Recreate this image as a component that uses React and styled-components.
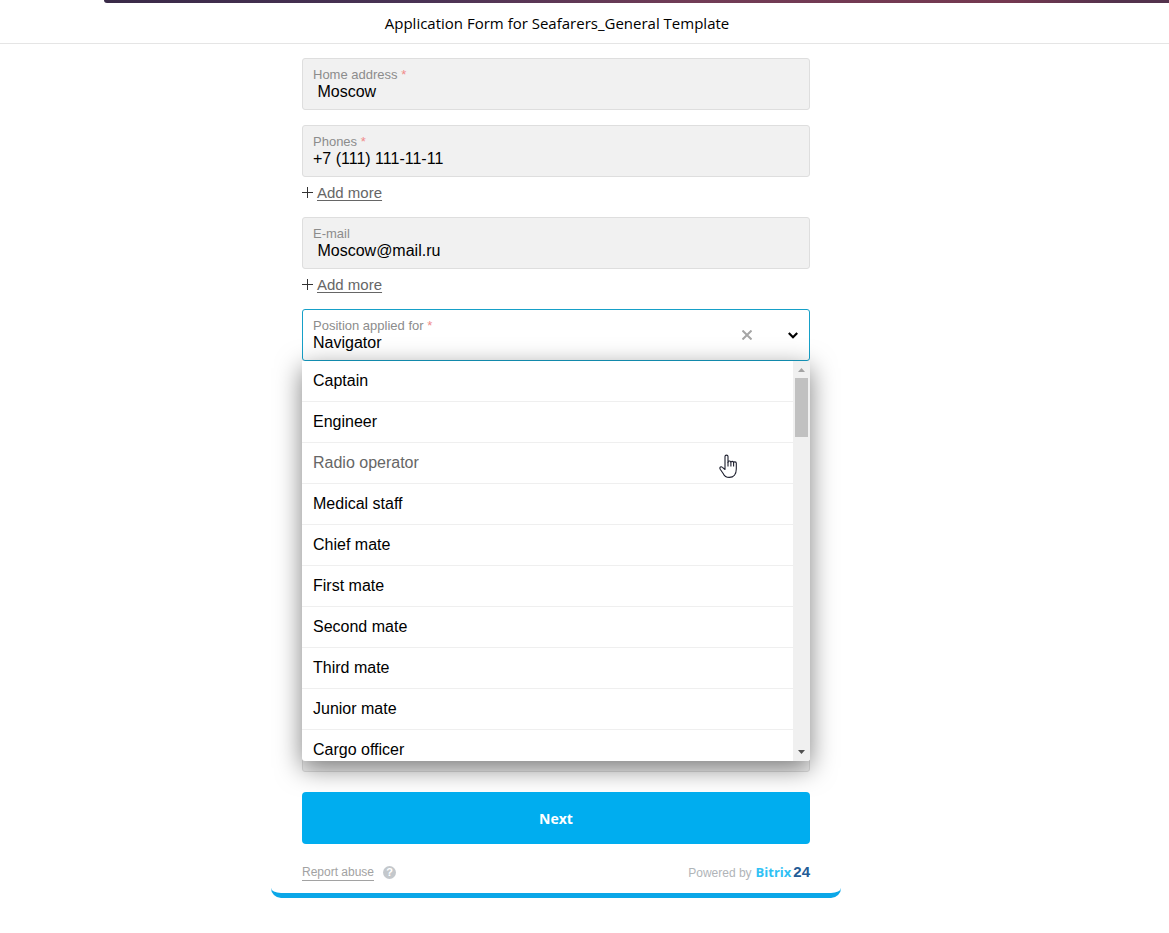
import { useId, useState } from 'react';
import styled, { createGlobalStyle } from 'styled-components';

const positions = [
    'Captain',
    'Engineer',
    'Radio operator',
    'Medical staff',
    'Chief mate',
    'First mate',
    'Second mate',
    'Third mate',
    'Junior mate',
    'Cargo officer'
];

function TextField({ label, required, type = 'text', initial }) {
    const id = useId();
    const [value, setValue] = useState(initial);

    return (
        <Field>
            <Label htmlFor={id}>
                {label} {required && <Required>*</Required>}
            </Label>
            <Input id={id} type={type} value={value} onChange={(e) => setValue(e.target.value)} />
        </Field>
    );
}

function AddMore() {
    return (
        <AddRow>
            <svg width="11" height="11" viewBox="0 0 11 11" stroke="#333" aria-hidden="true">
                <path d="M5.5 0v11M0 5.5h11" />
            </svg>
            <AddButton type="button">Add more</AddButton>
        </AddRow>
    );
}

function PositionField() {
    const [value, setValue] = useState('Navigator');
    const [active, setActive] = useState('Radio operator');

    return (
        <SelectWrap>
            <Field $open>
                <Label htmlFor="position">
                    Position applied for <Required>*</Required>
                </Label>
                <Select id="position" value={value} onChange={(e) => setValue(e.target.value)}>
                    <option>Navigator</option>
                    {positions.map((name) => (
                        <option key={name}>{name}</option>
                    ))}
                </Select>
                <FieldIcons>
                    <ClearButton type="button" aria-label="Clear" onClick={() => setValue('')}>
                        <svg width="10" height="10" viewBox="0 0 10 10" stroke="#a5a5a5" strokeWidth="2">
                            <path d="M.5 .5l9 9M9.5 .5l-9 9" />
                        </svg>
                    </ClearButton>
                    <svg width="10" height="7" viewBox="0 0 10 7" fill="none" stroke="#000" strokeWidth="2.2" aria-hidden="true">
                        <path d="M.8 1L5 5.2 9.2 1" />
                    </svg>
                </FieldIcons>
            </Field>
            <Popup>
                <Options role="listbox" aria-label="Position applied for">
                    {positions.map((name) => (
                        <Option
                            key={name}
                            role="option"
                            aria-selected={name === value}
                            $active={name === active}
                            onMouseEnter={() => setActive(name)}
                            onClick={() => setValue(name)}
                        >
                            {name}
                            {name === active && <HandCursor />}
                        </Option>
                    ))}
                </Options>
                <Scrollbar>
                    <svg width="7" height="4" viewBox="0 0 7 4" fill="#a3a3a3">
                        <path d="M0 4L3.5 0 7 4z" />
                    </svg>
                    <Thumb />
                    <svg width="7" height="4" viewBox="0 0 7 4" fill="#505050">
                        <path d="M0 0L3.5 4 7 0z" />
                    </svg>
                </Scrollbar>
            </Popup>
        </SelectWrap>
    );
}

function HandCursor() {
    return (
        <Hand width="19" height="25" viewBox="0 0 19 25" fill="#fff" stroke="#1d1f2e" strokeWidth="1.1" strokeLinejoin="round" aria-hidden="true">
            <path d="M6 13.5V2.5C6 .6 9 .6 9 2.5V8.2c0-1.600 2.900-1.500 2.900.2 0-1.500 2.700-1.300 2.700.4 0-1.400 2.700-1.200 2.700.5V15c0 5-2.600 8.400-7 8.400-3.200 0-5-1.400-6.300-4.200L1.200 15.200c-1-1.900.8-3.200 2.200-1.900L6 15.500z" />
            <path d="M9 8v4.500M11.900 8.400v4.100M14.600 8.800v3.700" fill="none" />
        </Hand>
    );
}

export default function App() {
    return (
        <>
            <GlobalStyle />
            <TopStrip />
            <Header>
                <Title>Application Form for Seafarers_General Template</Title>
            </Header>
            <Main>
                <Form onSubmit={(e) => e.preventDefault()}>
                    <TextField label="Home address" required initial=" Moscow" />
                    <Group>
                        <TextField label="Phones" required type="tel" initial="+7 (111) 111-11-11" />
                        <AddMore />
                    </Group>
                    <Group>
                        <TextField label="E-mail" initial=" Moscow@mail.ru" />
                        <AddMore />
                    </Group>
                    <PositionField />
                    <Notes aria-label="Additional information" />
                    <NextButton type="submit">Next</NextButton>
                    <Footer>
                        <Report>
                            <ReportLink href="#report">Report abuse</ReportLink>
                            <HelpIcon>?</HelpIcon>
                        </Report>
                        <Powered>
                            Powered by
                            <Brand>Bitrix</Brand>
                            <BrandNumber>24</BrandNumber>
                        </Powered>
                    </Footer>
                </Form>
            </Main>
        </>
    );
}

const GlobalStyle = createGlobalStyle`
  * {
    box-sizing: border-box;
  }

  body {
    margin: 0;
    background: #fff;
    color: #000;
    font-family: "Liberation Sans", Arial, sans-serif;
    font-size: 16px;
  }

  button, input, select, textarea {
    font: inherit;
    color: inherit;
  }
`;

const TopStrip = styled.div`
  height: 3px;
  margin-left: 104px;
  border-bottom-left-radius: 4px;
  background: linear-gradient(90deg, #3a2a48, #4a3355 30%, #713c56 55%, #743850 85%, #53324d 95%);
`;

const Header = styled.header`
  height: 41px;
  display: flex;
  align-items: center;
  justify-content: center;
  padding-right: 55px;
  border-bottom: 1px solid #e5e5e5;
`;

const Title = styled.h1`
  margin: 0;
  font-family: "Open Sans", "Noto Sans", sans-serif;
  font-size: 15px;
  font-weight: 400;
  line-height: 20px;
`;

const Main = styled.main`
  display: flex;
  justify-content: center;
  padding-right: 57px;
`;

const Form = styled.form`
  width: 100%;
  max-width: 570px;
  display: flex;
  flex-direction: column;
  gap: 15px;
  padding: 14px 31px 12px;
  border-bottom: 5px solid #0ba7e8;
  border-radius: 0 0 10px 10px;
`;

const Field = styled.div`
  position: relative;
  height: 52px;
  display: flex;
  flex-direction: column;
  padding: 8px 10px 0;
  background: ${props => props.$open ? '#fff' : '#f1f1f1'};
  border: 1px solid ${props => props.$open ? '#16a0c8' : '#dedede'};
  border-radius: 3px;
`;

const Label = styled.label`
  color: #8c8c8c;
  font-size: 13px;
  line-height: 15px;
`;

const Required = styled.span`
  color: #f08a8a;
`;

const Input = styled.input`
  width: 100%;
  height: 20px;
  padding: 0;
  border: none;
  background: none;
  outline: none;
`;

const Group = styled.div`
  display: flex;
  flex-direction: column;
  gap: 6px;
`;

const AddRow = styled.div`
  display: flex;
  align-items: center;
  gap: 4px;
  height: 19px;
`;

const AddButton = styled.button`
  padding: 0;
  border: none;
  background: none;
  color: #666;
  font-size: 15px;
  line-height: 19px;
  text-decoration: underline;
  text-underline-offset: 2px;
  cursor: pointer;
`;

const SelectWrap = styled.div`
  position: relative;
`;

const Select = styled.select`
  width: 100%;
  height: 18px;
  padding: 0;
  border: none;
  background: none;
  outline: none;
  appearance: none;
`;

const FieldIcons = styled.div`
  position: absolute;
  top: 0;
  right: 11px;
  bottom: 0;
  display: flex;
  align-items: center;
  gap: 36px;
`;

const ClearButton = styled.button`
  display: flex;
  padding: 0;
  border: none;
  background: none;
`;

const Popup = styled.div`
  position: absolute;
  z-index: 1;
  top: 100%;
  left: 0;
  right: 0;
  height: 400px;
  display: flex;
  overflow: hidden;
  background: #fff;
  border-radius: 0 0 3px 3px;
  box-shadow: 0 7px 26px rgba(0, 0, 0, 0.5);
`;

const Options = styled.ul`
  flex: 1;
  margin: 0;
  padding: 0;
  list-style: none;
`;

const Option = styled.li`
  position: relative;
  padding: 10px 11px;
  border-bottom: 1px solid #efefef;
  color: ${props => props.$active ? '#666' : '#000'};
  line-height: 20px;
`;

const Hand = styled.svg`
  position: absolute;
  top: 11px;
  right: 55px;
`;

const Scrollbar = styled.div`
  width: 17px;
  display: flex;
  flex-direction: column;
  align-items: center;
  padding: 7px 0;
  background: #f0f0f0;
`;

const Thumb = styled.div`
  width: 13px;
  height: 59px;
  margin: 6px 0 auto;
  background: #c1c1c1;
`;

const Notes = styled.textarea`
  height: 396px;
  background: #f1f1f1;
  border: 1px solid #dedede;
  border-radius: 3px;
  resize: none;
`;

const NextButton = styled.button`
  position: relative;
  z-index: 2;
  height: 52px;
  margin-top: 5px;
  border: none;
  border-radius: 4px;
  background: #00adef;
  color: #fff;
  font-family: "Open Sans", sans-serif;
  font-size: 14px;
  font-weight: 700;
  cursor: pointer;
`;

const Footer = styled.footer`
  display: flex;
  align-items: center;
  justify-content: space-between;
  margin-top: 5px;
  height: 17px;
  color: #b0b4b8;
  font-size: 12px;
`;

const Report = styled.div`
  display: flex;
  align-items: center;
  gap: 9px;
`;

const ReportLink = styled.a`
  color: #a2a2a2;
  line-height: 15px;
  border-bottom: 1px solid #a2a2a2;
  text-decoration: none;
`;

const HelpIcon = styled.span`
  width: 13px;
  height: 13px;
  border-radius: 50%;
  background: #c4c8cc;
  color: #fff;
  font-size: 11px;
  font-weight: 700;
  line-height: 13px;
  text-align: center;
`;

const Powered = styled.div`
  display: flex;
  align-items: baseline;
  line-height: 20px;
`;

const Brand = styled.b`
  margin-left: 4px;
  color: #2fc1f5;
  font-family: "Open Sans", sans-serif;
  font-size: 13px;
`;

const BrandNumber = styled.b`
  margin-left: 2px;
  color: #245c96;
  font-size: 15px;
`;
